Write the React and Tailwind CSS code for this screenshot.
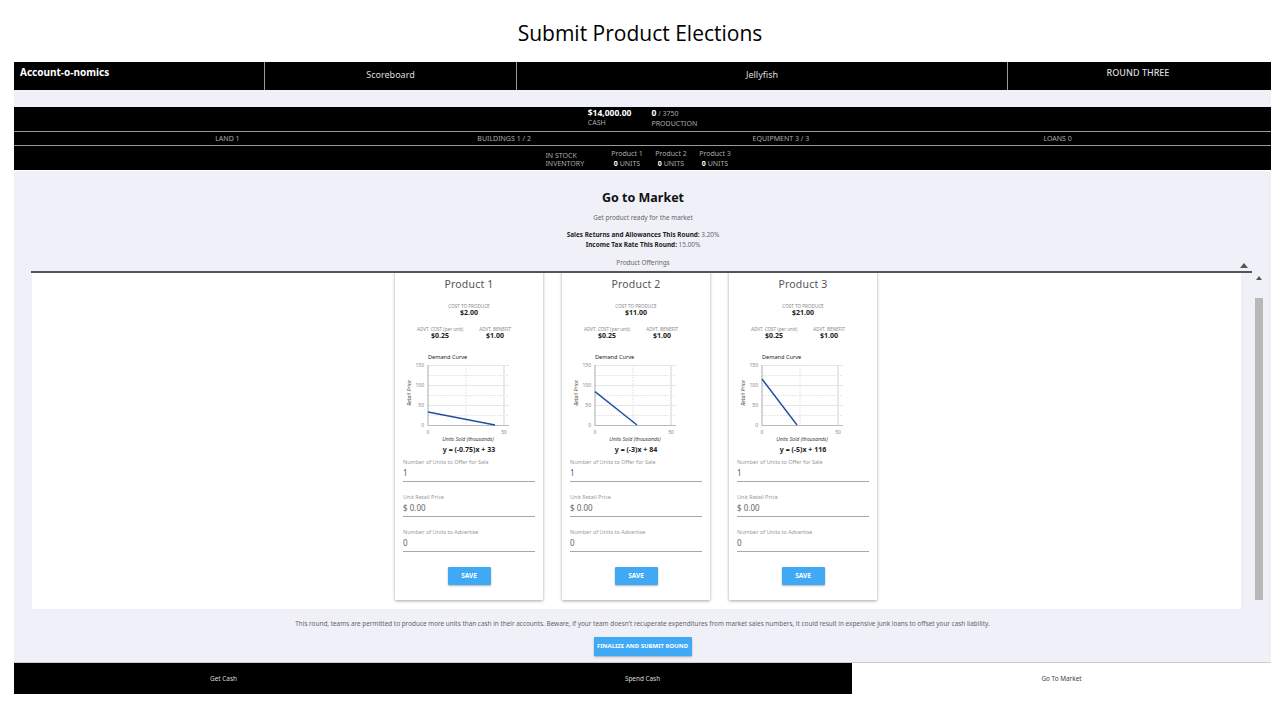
const products = [
  { name: "Product 1", cost: "$2.00", eq: "y = (-0.75)x + 33", line: [13, 47, 80, 60] },
  { name: "Product 2", cost: "$11.00", eq: "y = (-3)x + 84", line: [13, 26.6, 55, 60] },
  { name: "Product 3", cost: "$21.00", eq: "y = (-5)x + 116", line: [13, 14, 48, 60] },
];

function DemandChart({ line }) {
  const rows = [0, 10, 20, 30, 40, 50];
  return (
    <svg width="112" height="84" viewBox="0 0 112 84" className="block overflow-visible">
      {rows.map((y) => (
        <line key={y} x1="13" x2="94" y1={y + 0.5} y2={y + 0.5} stroke="#e6e6e6" strokeWidth="1" strokeDasharray={y % 20 === 0 ? "0" : "2 1"} />
      ))}
      <line x1="51" x2="51" y1="0" y2="60" stroke="#e6e6e6" strokeDasharray="2 1" />
      <line x1="89" x2="89" y1="0" y2="60" stroke="#e8e8e8" strokeWidth="2" />
      <line x1="13" x2="13" y1="0" y2="61" stroke="#aaa" />
      <line x1="13" x2="94" y1="60.5" y2="60.5" stroke="#bbb" />
      <line x1={line[0]} y1={line[1]} x2={line[2]} y2={line[3]} stroke="#1f4fa3" strokeWidth="1.4" />
      {[["150", 2], ["100", 22], ["50", 42], ["0", 62]].map(([t, y]) => (
        <text key={t} x="9" y={y} textAnchor="end" fontSize="5" fill="#888">{t}</text>
      ))}
      <text x="13" y="69" textAnchor="middle" fontSize="5" fill="#888">0</text>
      <text x="89" y="69" textAnchor="middle" fontSize="5" fill="#888">50</text>
      <text x="53" y="76" textAnchor="middle" fontSize="5.2" fontStyle="italic" fill="#444">Units Sold (thousands)</text>
    </svg>
  );
}

function Field({ label, value, color }) {
  return (
    <div className="h-[35px] flex flex-col">
      <div className="text-[5.5px] leading-[8px] text-[#9a9a9a] mt-[3px]">{label}</div>
      <div className={`text-[8px] leading-[10px] mt-[2px] ${color}`}>{value}</div>
      <div className="h-px bg-[#a8a8a8] mt-[3px]" />
    </div>
  );
}

function ProductCard({ p }) {
  return (
    <div className="w-[148px] h-[337px] -mt-[10px] bg-white shadow-[0_1px_3px_rgba(0,0,0,0.35)] flex flex-col items-center shrink-0">
      <div className="mt-[14px] text-[10.5px] leading-[14px] text-[#555] tracking-[0.2px]">{p.name}</div>
      <div className="mt-[12px] text-[4.6px] leading-[6px] text-[#888]">COST TO PRODUCE</div>
      <div className="text-[7px] leading-[8px] font-bold text-[#222]">{p.cost}</div>
      <div className="mt-[9px] w-full flex pl-[22px] pr-[32px] justify-between">
        <div className="flex flex-col items-center">
          <div className="text-[4.6px] leading-[6px] text-[#888] whitespace-nowrap">ADVT. COST (per unit)</div>
          <div className="text-[7px] leading-[8px] font-bold text-[#222]">$0.25</div>
        </div>
        <div className="flex flex-col items-center">
          <div className="text-[4.6px] leading-[6px] text-[#888] whitespace-nowrap">ADVT. BENEFIT</div>
          <div className="text-[7px] leading-[8px] font-bold text-[#222]">$1.00</div>
        </div>
      </div>
      <div className="mt-[13px] w-full pl-[33px] text-[5.6px] leading-[8px] text-[#222]">Demand Curve</div>
      <div className="mt-[4px] w-full pl-[20px] relative">
        <DemandChart line={p.line} />
        <div className="absolute -left-px top-[24px] w-[30px] text-center -rotate-90 text-[5.2px] leading-[8px] italic text-[#444] whitespace-nowrap">Retail Price</div>
      </div>
      <div className="-mt-[4px] text-[7px] leading-[9px] font-bold text-[#222]">{p.eq}</div>
      <div className="mt-[1px] w-full px-[8px] flex flex-col">
        <Field label="Number of Units to Offer for Sale" value="1" color="text-[#6b4a8a]" />
        <Field label="Unit Retail Price" value="$ 0.00" color="text-[#666]" />
        <Field label="Number of Units to Advertise" value="0" color="text-[#666]" />
      </div>
      <button className="mt-[7px] w-[43px] h-[18px] bg-[#3fa9f5] text-white text-[6.5px] font-bold rounded-[1px] shadow-[0_1px_2px_rgba(0,0,0,0.3)]">SAVE</button>
    </div>
  );
}

export default function App() {
  return (
    <div className="w-[1280px] h-[720px] bg-white overflow-hidden flex flex-col" style={{ fontFamily: '"Noto Sans", sans-serif' }}>
      <h1 className="h-[62px] flex items-center justify-center pt-[5px] text-[21px] text-black" style={{ fontFamily: '"Open Sans", sans-serif' }}>
        Submit Product Elections
      </h1>

      <div className="w-[1257px] h-[632px] ml-[14px] bg-[#f0f0f8] flex flex-col">
        {/* Top nav */}
        <div className="h-[28px] bg-black text-[#ddd] flex text-[9px] shrink-0">
          <div className="w-[251px] border-r border-[#999] pl-[6px] pt-[4px] text-[10px] leading-[13px] font-bold text-white">Account-o-nomics</div>
          <div className="w-[252px] border-r border-[#999] flex items-center justify-center pb-[2px]">Scoreboard</div>
          <div className="w-[491px] border-r border-[#999] flex items-center justify-center pb-[2px]">Jellyfish</div>
          <div className="flex-1 flex justify-center pt-[5px] pr-[3px] leading-[12px] font-medium">ROUND THREE</div>
        </div>

        {/* Stats */}
        <div className="mt-[17px] shrink-0 bg-black text-[#aaa] text-[7px] leading-[10px]">
          <div className="h-[25px] flex justify-center gap-[20px] pt-[1px] border-b border-[#999]">
            <div>
              <div className="text-[8.5px] font-bold text-white">$14,000.00</div>
              <div>CASH</div>
            </div>
            <div>
              <div><span className="text-[8.5px] font-bold text-white">0</span> / 3750</div>
              <div>PRODUCTION</div>
            </div>
          </div>
          <div className="h-[14px] grid grid-cols-4 px-[75px] items-center text-center border-b border-[#999]">
            <div>LAND 1</div>
            <div>BUILDINGS 1 / 2</div>
            <div>EQUIPMENT 3 / 3</div>
            <div>LOANS 0</div>
          </div>
          <div className="h-[25px] flex justify-center items-start gap-[11px] pt-[3px] pr-[8px] border-b border-white">
            <div className="w-[54px] pt-[3px] leading-[8px]">IN STOCK<br />INVENTORY</div>
            {["Product 1", "Product 2", "Product 3"].map((name) => (
              <div key={name} className="w-[33px] text-center whitespace-nowrap">
                <div>{name}</div>
                <div><span className="font-bold text-white">0</span> UNITS</div>
              </div>
            ))}
          </div>
        </div>

        {/* Go to market */}
        <div className="flex flex-col items-center pl-[1px] shrink-0">
          <h2 className="mt-[19px] text-[12.5px] leading-[16px] font-bold text-[#111]">Go to Market</h2>
          <p className="mt-[7px] text-[6.4px] leading-[10px] text-[#666]">Get product ready for the market</p>
          <p className="mt-[7px] text-[6.4px] leading-[10px] text-[#666]"><b className="text-[#222]">Sales Returns and Allowances This Round:</b> 3.20%</p>
          <p className="text-[6.4px] leading-[10px] text-[#666]"><b className="text-[#222]">Income Tax Rate This Round:</b> 15.00%</p>
          <p className="mt-[8px] text-[6.4px] leading-[10px] text-[#666]">Product Offerings</p>
        </div>

        <div className="relative ml-[17px] w-[1221px] h-[2px] mt-[3px] bg-[#555] shrink-0">
          <div className="absolute right-[4px] -top-[8px] w-0 h-0 border-x-[4px] border-x-transparent border-b-[5px] border-b-[#555]" />
        </div>

        {/* Scroll area */}
        <div className="flex ml-[18px] h-[336px] shrink-0">
          <div className="w-[1209px] h-full bg-white overflow-hidden flex justify-center gap-[19px] pr-[1px]">
            {products.map((p) => (
              <ProductCard key={p.name} p={p} />
            ))}
          </div>
          <div className="ml-[13px] w-[9px] h-[331px] flex flex-col items-center">
            <div className="mt-[3px] w-0 h-0 border-x-[3px] border-x-transparent border-b-[4px] border-b-[#555]" />
            <div className="mt-[18px] w-[8px] h-[302px] bg-[#b8b8b8]" />
          </div>
        </div>

        <p className="mt-[10px] text-center text-[6.4px] leading-[10px] text-[#666] shrink-0">
          This round, teams are permitted to produce more units than cash in their accounts. Beware, if your team doesn't recuperate expenditures from market sales numbers, it could result in expensive junk loans to offset your cash liability.
        </p>
        <div className="flex justify-center mt-[8px] shrink-0">
          <button className="w-[98px] h-[19px] bg-[#3fa9f5] text-white text-[6px] font-bold rounded-[1px] shadow-[0_1px_2px_rgba(0,0,0,0.3)] whitespace-nowrap">FINALIZE AND SUBMIT ROUND</button>
        </div>

        {/* Bottom tabs */}
        <div className="mt-[6px] border-t border-[#ccc] flex-1 grid grid-cols-3 text-[6.4px]">
          <div className="bg-black text-[#ddd] flex items-center justify-center">Get Cash</div>
          <div className="bg-black text-[#ddd] flex items-center justify-center">Spend Cash</div>
          <div className="bg-white text-[#444] flex items-center justify-center">Go To Market</div>
        </div>
      </div>
    </div>
  );
}
